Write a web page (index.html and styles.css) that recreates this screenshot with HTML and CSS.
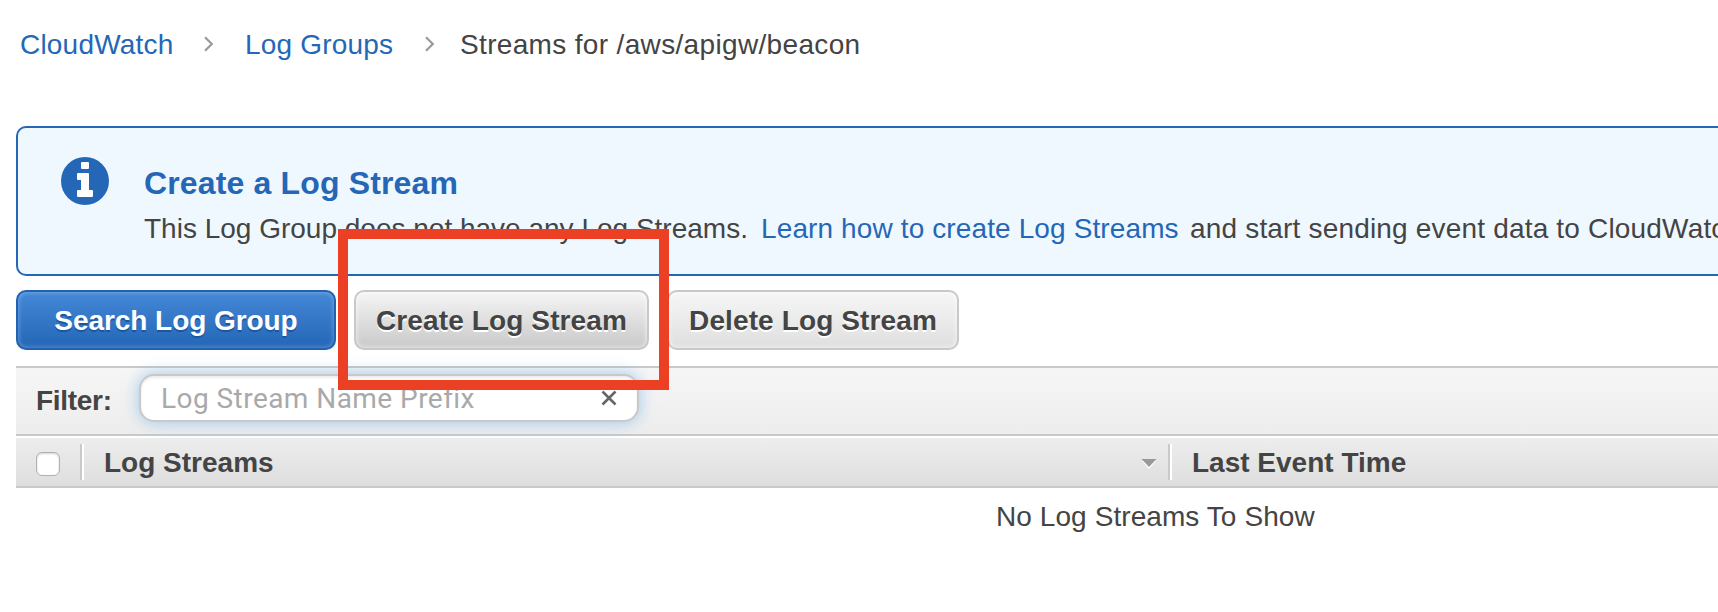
FILE: index.html
```html
<!DOCTYPE html>
<html lang="en">
<head>
<meta charset="utf-8">
<title>CloudWatch Log Streams</title>
<link rel="stylesheet" href="styles.css">
</head>
<body>
<nav class="breadcrumb">
  <a class="crumb crumb-home" href="#">CloudWatch</a>
  <svg class="chevron" width="10" height="16" viewBox="0 0 10 16"><path d="M1 1.2 7.8 8 1 14.8"/></svg>
  <a class="crumb crumb-groups" href="#">Log Groups</a>
  <svg class="chevron" width="10" height="16" viewBox="0 0 10 16"><path d="M1 1.2 7.8 8 1 14.8"/></svg>
  <span class="crumb crumb-current">Streams for /aws/apigw/beacon</span>
</nav>
<section class="notice">
  <svg class="info" width="48" height="48" viewBox="0 0 48 48"><circle cx="24" cy="24" r="24" fill="#2567b7"/><path fill="#fff" d="M21 5h6q1 0 1 1v5q0 1-1 1h-6q-1 0-1-1V6q0-1 1-1zM17 16h10q1 0 1 1v16h3q1 0 1 1v5q0 1-1 1H17q-1 0-1-1v-5q0-1 1-1h3V23h-3q-1 0-1-1v-5q0-1 1-1z"/></svg>
  <div class="notice-body">
    <h2 class="notice-title">Create a Log Stream</h2>
    <p class="notice-text"><span class="lead">This Log Group does not have any Log Streams.</span><a class="learn" href="#">Learn how to create Log Streams</a><span class="tail">and start sending event data to CloudWatch</span></p>
  </div>
</section>
<div class="actions">
  <button class="btn btn-primary">Search Log Group</button>
  <div class="spot"><button class="btn btn-active">Create Log Stream</button><span class="highlight"></span></div>
  <button class="btn btn-delete">Delete Log Stream</button>
</div>
<div class="filter">
  <span class="filter-label">Filter:</span>
  <div class="search"><span class="placeholder">Log Stream Name Prefix</span>
    <svg class="clear" width="16" height="16" viewBox="0 0 16 16"><path d="M1.5 1.5l13 13M14.5 1.5l-13 13"/></svg>
  </div>
</div>
<div class="table-head">
  <span class="checkbox"></span>
  <div class="col col-name"><span class="name-label">Log Streams</span><svg class="sort" width="16" height="12" viewBox="0 0 16 12"><path d="M1 3h14L8 11z" fill="#fff"/><path d="M.5 1h15L8 9z" fill="#999"/></svg></div>
  <div class="col col-time"><span>Last Event Time</span></div>
</div>
<div class="empty">No Log Streams To Show</div>
</body>
</html>
```
FILE: styles.css
```css
* { box-sizing: border-box; }
body {
  margin: 0;
  height: 612px;
  overflow: hidden;
  background: #fff;
  color: #444;
  font: 28px/40px "Liberation Sans", Arial, sans-serif;
  white-space: nowrap;
}
a { color: #2567b7; text-decoration: none; }

.breadcrumb {
  display: flex;
  align-items: center;
  height: 126px;
  padding: 25px 0 61px 20px;
}
.crumb-home { width: 184px; letter-spacing: .2px; }
.crumb-groups { width: 180px; letter-spacing: .2px; }
.crumb-current { letter-spacing: .34px; }
.chevron { margin: -2px 31px 0 0; flex: none; fill: none; stroke: #999; stroke-width: 2.2; }
.chevron ~ .chevron { margin-right: 25px; }

.notice {
  display: flex;
  width: 1800px;
  height: 150px;
  margin-left: 16px;
  padding: 29px 0 0 43px;
  border: 2px solid #2567b7;
  border-radius: 10px;
  background: #f0f8ff;
}
.info { flex: none; margin-right: 35px; }
.notice-title { margin: 6px 0 0; font-size: 32px; line-height: 40px; color: #2567b7; letter-spacing: .15px; }
.notice-text { display: flex; margin: 6px 0 0; }
.lead { width: 617px; }
.learn { width: 429px; letter-spacing: .12px; }
.tail { letter-spacing: .18px; }

.actions { display: flex; gap: 18px; margin: 14px 0 16px 16px; }
.spot { position: relative; }
.btn {
  height: 60px;
  padding: 1px 0 0;
  border: 2px solid #c9c9c9;
  border-radius: 10px;
  background: linear-gradient(#f6f6f6, #dfdfdf);
  box-shadow: inset 0 0 4px 1px rgba(255,255,255,.55);
  color: #444;
  font: bold 28px/56px "Liberation Sans", Arial, sans-serif;
  letter-spacing: .12px;
  text-shadow: 0 2px 0 #fff;
}
.btn-primary {
  width: 320px;
  border-color: #2163b2;
  background: linear-gradient(#4488d7, #2466b6);
  box-shadow: inset 0 0 4px 1px rgba(255,255,255,.25);
  color: #fff;
  letter-spacing: -.06px;
  text-shadow: 0 2px 0 #1c569e;
}
.btn-active { display: block; width: 295px; background: linear-gradient(#f5f5f5, #c9c9c9); }
.btn-delete { width: 292px; }
.highlight {
  position: absolute;
  z-index: 2;
  left: -16px;
  top: -61px;
  width: 331px;
  height: 161px;
  border: 10px solid #ec4025;
}

.filter {
  display: flex;
  height: 70px;
  margin-left: 16px;
  padding: 6px 0 0 20px;
  border: solid #c9c9c9;
  border-width: 2px 0;
  background: linear-gradient(#f6f6f6, #ededed);
}
.filter-label { width: 103px; padding-top: 7px; font-weight: bold; letter-spacing: -.3px; }
.search {
  display: flex;
  align-items: center;
  justify-content: space-between;
  width: 500px;
  height: 48px;
  padding: 0 20px;
  border: 2px solid #c9c9c9;
  border-radius: 15px;
  background: #fff;
  box-shadow: 0 0 16px rgba(100,170,230,.6), inset 0 2px 3px rgba(0,0,0,.08);
}
.placeholder { padding-top: 2px; font: 28px/42px Roboto, sans-serif; letter-spacing: .45px; color: #a9a9a9; }
.clear { fill: none; stroke: #666; stroke-width: 2.6; }

.table-head {
  display: flex;
  align-items: center;
  height: 50px;
  margin: 2px 0 0 16px;
  padding-left: 20px;
  border-bottom: 2px solid #c9c9c9;
  background: linear-gradient(#ededed, #dedede);
  font-weight: bold;
}
.checkbox {
  width: 24px;
  height: 24px;
  margin: 4px 20px 0 0;
  border: 1px solid #b0b0b0;
  border-radius: 6px;
  background: #fff;
  box-shadow: inset 0 1px 2px rgba(0,0,0,.18);
}
.col {
  display: flex;
  align-items: center;
  height: 36px;
  border-left: 2px solid #c9c9c9;
  box-shadow: inset 2px 0 #fff;
  padding-left: 22px;
}
.col span { padding-top: 2px; }
.col-name { width: 1088px; padding-right: 11px; justify-content: space-between; }
.sort { margin-top: 3px; }
.empty { padding: 9px 0 0 996px; letter-spacing: .08px; }
```
